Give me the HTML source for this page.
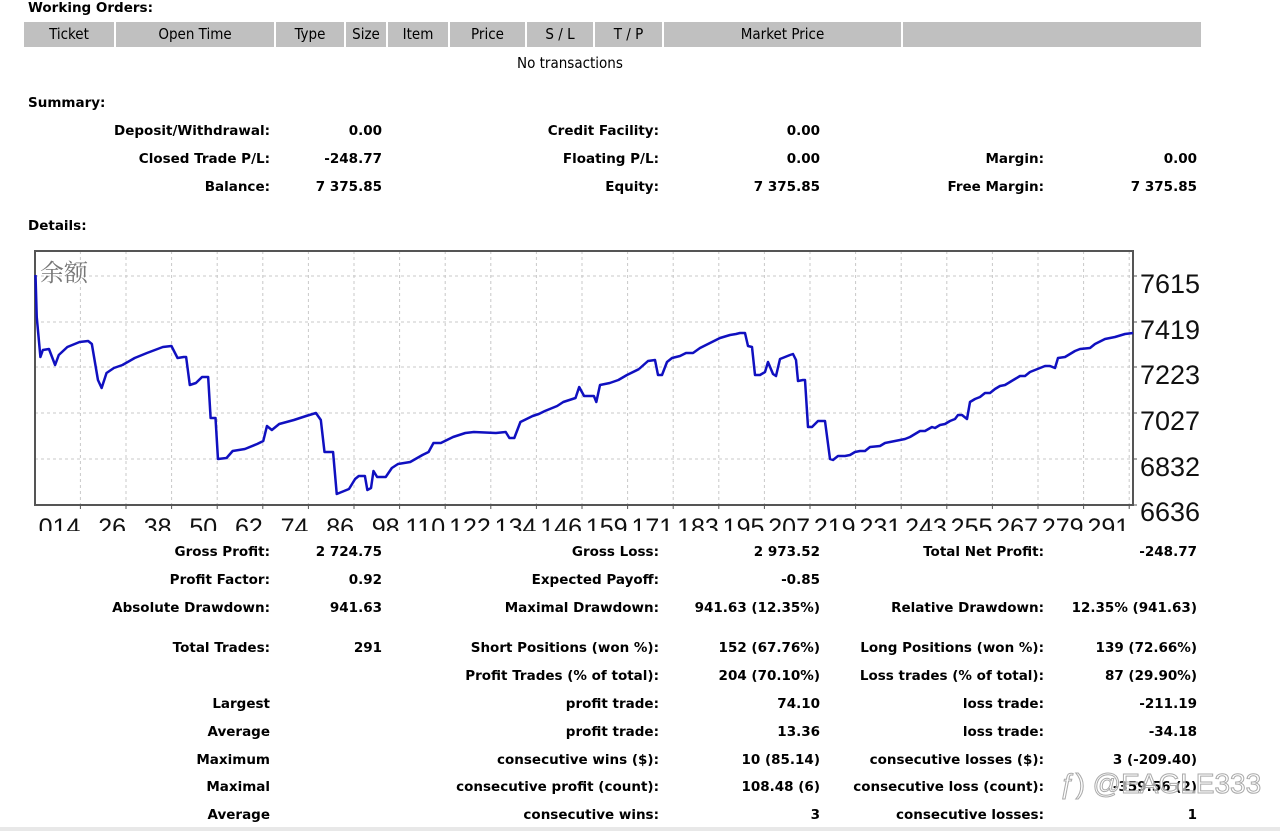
<!DOCTYPE html>
<html><head><meta charset="utf-8"><style>
body{margin:0;width:1280px;height:831px;background:#fff;position:relative;overflow:hidden;font-family:"DejaVu Sans","Liberation Sans",sans-serif;color:#000}
.t{position:absolute;font-weight:bold;font-size:13.5px;white-space:nowrap;line-height:16px}
.r{text-align:right}
.hd{position:absolute;top:22px;height:25px;background:#c0c0c0;font-size:15px;line-height:25px;text-align:center;font-family:"DejaVu Sans Condensed","DejaVu Sans",sans-serif}
</style></head><body>
<div class="t" style="left:28px;top:0px">Working Orders:</div>
<div class="hd" style="left:24px;width:90px">Ticket</div>
<div class="hd" style="left:116px;width:158px">Open Time</div>
<div class="hd" style="left:276px;width:68px">Type</div>
<div class="hd" style="left:346px;width:40px">Size</div>
<div class="hd" style="left:388px;width:60px">Item</div>
<div class="hd" style="left:450px;width:75px">Price</div>
<div class="hd" style="left:527px;width:66px">S / L</div>
<div class="hd" style="left:595px;width:67px">T / P</div>
<div class="hd" style="left:664px;width:237px">Market Price</div>
<div class="hd" style="left:903px;width:298px"></div>
<div style="position:absolute;left:517px;top:54px;font-size:15px;font-family:'DejaVu Sans Condensed','DejaVu Sans',sans-serif">No transactions</div>

<div class="t" style="left:28px;top:95px">Summary:</div>
<div class="t" style="left:28px;top:218px">Details:</div>

<svg style="position:absolute;left:0;top:0" width="1280" height="831">
<g stroke="#c8c8c8" stroke-dasharray="3,3" stroke-width="1">
<line x1="35" x2="1133" y1="276" y2="276"/><line x1="35" x2="1133" y1="322" y2="322"/><line x1="35" x2="1133" y1="367" y2="367"/><line x1="35" x2="1133" y1="413" y2="413"/><line x1="35" x2="1133" y1="459" y2="459"/>
<path d="M80.4 251V505M126 251V505M171.6 251V505M217.2 251V505M262.8 251V505M308.4 251V505M354 251V505M399.6 251V505M445.2 251V505M490.8 251V505M536.4 251V505M582 251V505M627.6 251V505M673.2 251V505M718.8 251V505M764.4 251V505M810 251V505M855.6 251V505M901.2 251V505M946.8 251V505M992.4 251V505M1038 251V505M1083.6 251V505M1129.2 251V505"/>
</g>
<rect x="35" y="251" width="1098" height="254" fill="none" stroke="#555" stroke-width="2"/>
<path stroke="#555" d="M80.4 505v4M126 505v4M171.6 505v4M217.2 505v4M262.8 505v4M308.4 505v4M354 505v4M399.6 505v4M445.2 505v4M490.8 505v4M536.4 505v4M582 505v4M627.6 505v4M673.2 505v4M718.8 505v4M764.4 505v4M810 505v4M855.6 505v4M901.2 505v4M946.8 505v4M992.4 505v4M1038 505v4M1083.6 505v4M1129.2 505v4M1133 276h4M1133 322h4M1133 367h4M1133 413h4M1133 459h4M1133 505h4"/>
<g fill="none" stroke="#1010c0" stroke-width="2.5" stroke-linejoin="round">
<polyline transform="scale(1.2245,1)" vector-effect="non-scaling-stroke" points="29,275 30,317 33,357 35,350 40,349 45,365 48,355 55,347 65,342 72,341 75,344 80,380 83,388 87,373 93,368 100,365 110,358 120,353 133,347 140,346 145,358 150,357 152,357 155,385 160,383 165,377 170,377 172,418 176,418 178,459 185,458 190,451 200,449 210,444 215,441 218,426 222,430 228,424 240,420 250,416 258,413 262,420 265,452 272,452 275,494 285,489 290,479 293,476 298,476 300,490 303,488 305,471 308,477 315,477 320,468 325,464 335,462 345,455 350,452 354,443 360,443 370,437 380,433 387,432 405,433 413,432 416,438 420,438 425,422 435,416 440,414 445,411 455,406 460,402 470,398 473,387 477,396 485,396 487,402 490,385 498,383 505,380 512,375 522,369"/>
<polyline points="639,369 648,361 655,360 658,375 662,375 667,362 672,358 680,356 686,353 693,353 700,348 710,343 720,338 730,335 736,334 740,333 745,333 748,346 752,347 755,375 760,375 765,372 768,362 773,374 776,376 780,359 790,355 793,354 796,360 798,381 803,380 805,380 808,427 812,427 818,421 825,421 830,459 833,460 838,456 845,456 850,455 855,452 860,451 865,451 870,447 880,446 885,443 890,442 895,441 905,439 910,437 915,434 920,431 925,431 932,427 935,428 940,425 945,424 950,421 955,419 958,415 962,415 967,419 970,402 975,399 980,397 985,393 990,393 995,389 1000,386 1005,385 1010,382 1015,379 1020,376 1025,376 1030,372 1040,368 1045,366 1050,366 1055,368 1058,358 1065,357 1070,354 1075,351 1080,349 1090,348 1095,344 1105,339 1115,337 1125,334 1133,333"/>
</g>
<text x="40" y="281" font-family="Noto Serif CJK SC,serif" font-size="24" fill="#777">余额</text>
<g font-family="Liberation Sans,sans-serif" font-size="27" fill="#111">
<text x="1140" y="293">7615</text><text x="1140" y="339">7419</text><text x="1140" y="384">7223</text><text x="1140" y="430">7027</text><text x="1140" y="476">6832</text><text x="1140" y="521">6636</text>
</g>
<defs><clipPath id="cp2"><rect x="0" y="505" width="1135" height="26"/></clipPath></defs>
<g clip-path="url(#cp2)" font-family="Liberation Sans,sans-serif" font-size="25" fill="#111" text-anchor="end">
<text x="80.4" y="536">014</text><text x="126" y="536">26</text><text x="171.6" y="536">38</text><text x="217.2" y="536">50</text><text x="262.8" y="536">62</text><text x="308.4" y="536">74</text><text x="354" y="536">86</text><text x="399.6" y="536">98</text><text x="445.2" y="536">110</text><text x="490.8" y="536">122</text><text x="536.4" y="536">134</text><text x="582" y="536">146</text><text x="627.6" y="536">159</text><text x="673.2" y="536">171</text><text x="718.8" y="536">183</text><text x="764.4" y="536">195</text><text x="810" y="536">207</text><text x="855.6" y="536">219</text><text x="901.2" y="536">231</text><text x="946.8" y="536">243</text><text x="992.4" y="536">255</text><text x="1038" y="536">267</text><text x="1083.6" y="536">279</text><text x="1129.2" y="536">291</text>
</g></svg>

<div class="t r" style="right:1010px;top:123px">Deposit/Withdrawal:</div><div class="t r" style="right:898px;top:123px">0.00</div>
<div class="t r" style="right:621px;top:123px">Credit Facility:</div><div class="t r" style="right:460px;top:123px">0.00</div>
<div class="t r" style="right:1010px;top:151px">Closed Trade P/L:</div><div class="t r" style="right:898px;top:151px">-248.77</div>
<div class="t r" style="right:621px;top:151px">Floating P/L:</div><div class="t r" style="right:460px;top:151px">0.00</div>
<div class="t r" style="right:236px;top:151px">Margin:</div><div class="t r" style="right:83px;top:151px">0.00</div>
<div class="t r" style="right:1010px;top:179px">Balance:</div><div class="t r" style="right:898px;top:179px">7 375.85</div>
<div class="t r" style="right:621px;top:179px">Equity:</div><div class="t r" style="right:460px;top:179px">7 375.85</div>
<div class="t r" style="right:236px;top:179px">Free Margin:</div><div class="t r" style="right:83px;top:179px">7 375.85</div>

<div class="t r" style="right:1010px;top:544px">Gross Profit:</div><div class="t r" style="right:898px;top:544px">2 724.75</div>
<div class="t r" style="right:621px;top:544px">Gross Loss:</div><div class="t r" style="right:460px;top:544px">2 973.52</div>
<div class="t r" style="right:236px;top:544px">Total Net Profit:</div><div class="t r" style="right:83px;top:544px">-248.77</div>
<div class="t r" style="right:1010px;top:572px">Profit Factor:</div><div class="t r" style="right:898px;top:572px">0.92</div>
<div class="t r" style="right:621px;top:572px">Expected Payoff:</div><div class="t r" style="right:460px;top:572px">-0.85</div>
<div class="t r" style="right:1010px;top:600px">Absolute Drawdown:</div><div class="t r" style="right:898px;top:600px">941.63</div>
<div class="t r" style="right:621px;top:600px">Maximal Drawdown:</div><div class="t r" style="right:460px;top:600px">941.63 (12.35%)</div>
<div class="t r" style="right:236px;top:600px">Relative Drawdown:</div><div class="t r" style="right:83px;top:600px">12.35% (941.63)</div>
<div class="t r" style="right:1010px;top:640px">Total Trades:</div><div class="t r" style="right:898px;top:640px">291</div>
<div class="t r" style="right:621px;top:640px">Short Positions (won %):</div><div class="t r" style="right:460px;top:640px">152 (67.76%)</div>
<div class="t r" style="right:236px;top:640px">Long Positions (won %):</div><div class="t r" style="right:83px;top:640px">139 (72.66%)</div>
<div class="t r" style="right:621px;top:668px">Profit Trades (% of total):</div><div class="t r" style="right:460px;top:668px">204 (70.10%)</div>
<div class="t r" style="right:236px;top:668px">Loss trades (% of total):</div><div class="t r" style="right:83px;top:668px">87 (29.90%)</div>
<div class="t r" style="right:1010px;top:696px">Largest</div>
<div class="t r" style="right:621px;top:696px">profit trade:</div><div class="t r" style="right:460px;top:696px">74.10</div>
<div class="t r" style="right:236px;top:696px">loss trade:</div><div class="t r" style="right:83px;top:696px">-211.19</div>
<div class="t r" style="right:1010px;top:724px">Average</div>
<div class="t r" style="right:621px;top:724px">profit trade:</div><div class="t r" style="right:460px;top:724px">13.36</div>
<div class="t r" style="right:236px;top:724px">loss trade:</div><div class="t r" style="right:83px;top:724px">-34.18</div>
<div class="t r" style="right:1010px;top:752px">Maximum</div>
<div class="t r" style="right:621px;top:752px">consecutive wins ($):</div><div class="t r" style="right:460px;top:752px">10 (85.14)</div>
<div class="t r" style="right:236px;top:752px">consecutive losses ($):</div><div class="t r" style="right:83px;top:752px">3 (-209.40)</div>
<div class="t r" style="right:1010px;top:779px">Maximal</div>
<div class="t r" style="right:621px;top:779px">consecutive profit (count):</div><div class="t r" style="right:460px;top:779px">108.48 (6)</div>
<div class="t r" style="right:236px;top:779px">consecutive loss (count):</div><div class="t r" style="right:83px;top:779px">-359.56 (2)</div>
<div class="t r" style="right:1010px;top:807px">Average</div>
<div class="t r" style="right:621px;top:807px">consecutive wins:</div><div class="t r" style="right:460px;top:807px">3</div>
<div class="t r" style="right:236px;top:807px">consecutive losses:</div><div class="t r" style="right:83px;top:807px">1</div>
<div style="position:absolute;left:1060px;top:768px;font-size:28px;font-family:'Liberation Sans',sans-serif;-webkit-text-stroke:1px #aaa;color:rgba(255,255,255,0.6)">ƒ) @EAGLE333</div>
<div style="position:absolute;left:0;top:827px;width:1280px;height:4px;background:#e8e8e8"></div>
</body></html>
